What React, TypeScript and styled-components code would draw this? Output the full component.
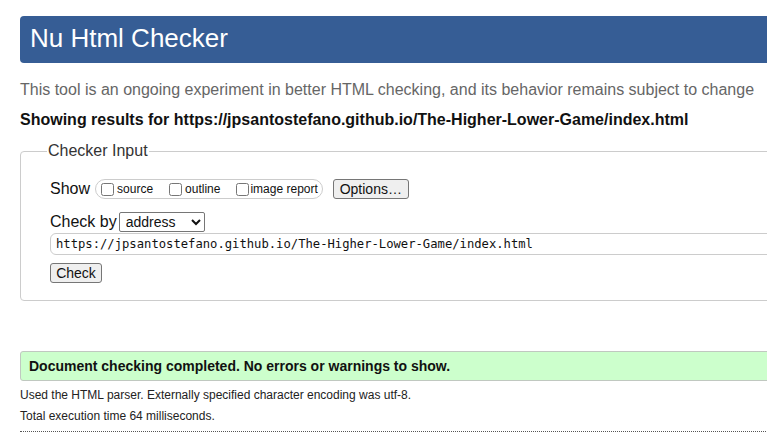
import React from 'react';
import styled, { createGlobalStyle } from 'styled-components';

const GlobalStyle = createGlobalStyle`
  html, body {
    margin: 0;
    padding: 0;
    background: #fff;
    overflow: hidden;
  }
  body {
    font-family: "Liberation Sans", Arial, sans-serif;
    color: #111;
  }
`;

const Page = styled.div`
  width: 800px;
  padding: 16px 0 0 20px;
`;

const Header = styled.h1`
  margin: 0;
  height: 47px;
  display: flex;
  align-items: center;
  padding: 0 0 2px 10px;
  box-sizing: border-box;
  background: #365d95;
  border-radius: 4px;
  color: #fff;
  font-size: 26px;
  font-weight: normal;
`;

const Intro = styled.p`
  margin: 18px 0 0;
  color: #666;
  font-size: 16px;
  line-height: 18px;
`;

const ResultsFor = styled.p`
  margin: 12px 0 0;
  font-size: 16px;
  line-height: 18px;
  font-weight: bold;
`;

const Fieldset = styled.fieldset`
  margin: 13px 0 0;
  padding: 19px 0 17px 29px;
  border: 1px solid #ccc;
  border-radius: 4px;
`;

const Legend = styled.legend`
  margin-left: -3px;
  padding: 0 1px;
  font-size: 16px;
  line-height: 18px;
  color: #333;
`;

const Row = styled.div<{ top?: number }>`
  display: flex;
  align-items: center;
  margin-top: ${p => p.top ?? 0}px;
`;

const RowLabel = styled.span`
  font-size: 16px;
  line-height: 18px;
`;

const ToggleGroup = styled.span`
  display: inline-flex;
  align-items: center;
  height: 20px;
  box-sizing: border-box;
  margin: 0 10px 0 5px;
  padding: 0 4px 0 5px;
  border: 1px solid #ccc;
  border-radius: 10px;
`;

const Toggle = styled.label<{ spacing?: number; tight?: boolean }>`
  display: inline-flex;
  align-items: center;
  font-size: 12px;
  margin-right: ${p => p.spacing ?? 0}px;

  input {
    margin-right: ${p => (p.tight ? 1 : 3)}px;
  }
`;

const Box = styled.input`
  width: 13px;
  height: 13px;
  margin: 0;
`;

const Button = styled.button<{ w: number }>`
  width: ${p => p.w}px;
  height: 20px;
  padding: 0;
  font-family: "Liberation Sans", Arial, sans-serif;
  font-size: 14px;
  color: #111;
  background: #efefef;
  border: 1px solid #767676;
  border-radius: 3px;
`;

const Select = styled.select`
  width: 86px;
  height: 20px;
  margin-left: 2px;
  padding: 0 0 0 2px;
  font-family: "Liberation Sans", Arial, sans-serif;
  font-size: 14px;
  color: #111;
  background: #fff;
  border: 1px solid #767676;
  border-radius: 2px;
`;

const UrlInput = styled.input`
  display: block;
  width: 760px;
  height: 22px;
  box-sizing: border-box;
  margin-top: 1px;
  padding: 0 0 0 5px;
  font-family: "DejaVu Sans Mono", "Liberation Mono", monospace;
  font-size: 12.2px;
  color: #111;
  border: 1px solid #ccc;
  border-radius: 6px;
  outline: none;
`;

const Success = styled.p`
  margin: 50px 0 0;
  height: 30px;
  box-sizing: border-box;
  display: flex;
  align-items: center;
  padding: 0 0 0 8px;
  background: #ccffcc;
  border: 1px solid #c0c8c0;
  border-radius: 3px 0 0 3px;
  font-size: 14px;
  font-weight: bold;
  color: #111;
`;

const Detail = styled.p<{ top: number }>`
  margin: ${p => p.top}px 0 0;
  font-size: 12px;
  line-height: 14px;
  color: #222;
`;

const Rule = styled.hr`
  margin: 8px 0 0;
  border: 0;
  border-top: 1px dotted #555;
`;

export default function App() {
  return (
    <>
      <GlobalStyle />
      <Page>
        <Header>Nu Html Checker</Header>
        <Intro>
          This tool is an ongoing experiment in better HTML checking, and its behavior remains subject to change
        </Intro>
        <ResultsFor>Showing results for https://jpsantostefano.github.io/The-Higher-Lower-Game/index.html</ResultsFor>
        <Fieldset>
          <Legend>Checker Input</Legend>
          <Row>
            <RowLabel>Show</RowLabel>
            <ToggleGroup>
              <Toggle spacing={16}>
                <Box type="checkbox" />source
              </Toggle>
              <Toggle spacing={16}>
                <Box type="checkbox" />outline
              </Toggle>
              <Toggle tight>
                <Box type="checkbox" />image report
              </Toggle>
            </ToggleGroup>
            <Button w={76}>Options…</Button>
          </Row>
          <Row top={13}>
            <RowLabel>Check by</RowLabel>
            <Select defaultValue="address">
              <option value="address">address</option>
              <option value="file">file upload</option>
              <option value="text">text input</option>
            </Select>
          </Row>
          <UrlInput defaultValue="https://jpsantostefano.github.io/The-Higher-Lower-Game/index.html" />
          <Row top={8}>
            <Button w={52}>Check</Button>
          </Row>
        </Fieldset>
        <Success>Document checking completed. No errors or warnings to show.</Success>
        <Detail top={7}>Used the HTML parser. Externally specified character encoding was utf-8.</Detail>
        <Detail top={7}>Total execution time 64 milliseconds.</Detail>
        <Rule />
      </Page>
    </>
  );
}
